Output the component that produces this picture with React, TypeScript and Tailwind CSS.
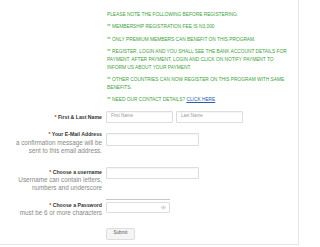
import { Eye } from "lucide-react";

const notes = [
  "PLEASE NOTE THE FOLLOWING BEFORE REGISTERING:",
  "** MEMBERSHIP REGISTRATION FEE IS N3,000",
  "** ONLY PREMIUM MEMBERS CAN BENEFIT ON THIS PROGRAM.",
  "** REGISTER, LOGIN AND YOU SHALL SEE THE BANK ACCOUNT DETAILS FOR PAYMENT. AFTER PAYMENT, LOGIN AND CLICK ON NOTIFY PAYMENT TO INFORM US ABOUT YOUR PAYMENT.",
  "** OTHER COUNTRIES CAN NOW REGISTER ON THIS PROGRAM WITH SAME BENEFITS.",
];

function Label({ text }: { text: string }) {
  return (
    <div className="text-[5.2px] leading-[8px] font-bold text-[#333]">
      <span className="text-[#c0392b]">* </span>
      {text}
    </div>
  );
}

function Input({ placeholder, className }: { placeholder?: string; className: string }) {
  return (
    <div
      className={`h-[12px] border border-[#ddd] rounded-[1px] bg-white shadow-[inset_0_1px_1px_rgba(0,0,0,0.04)] flex items-center px-[4px] text-[4.5px] text-[#999] ${className}`}
    >
      {placeholder}
    </div>
  );
}

export default function App() {
  return (
    <div className="w-[300px] h-[247px] bg-white overflow-hidden font-['Liberation_Sans',Arial,sans-serif]">
      <div className="w-[299px] h-[245px] border-r border-b border-[#e6e6e6]">
        {/* Notice */}
        <div className="pl-[107px] pt-[11px] w-[293px] text-[4.8px] leading-[7.6px] text-[#40a040] flex flex-col gap-[4.9px]">
          {notes.map((n) => (
            <p key={n}>{n}</p>
          ))}
          <p>
            ** NEED OUR CONTACT DETAILS?{" "}
            <span className="text-[#2a5db0] underline">CLICK HERE</span>
          </p>
        </div>

        {/* Name */}
        <div className="flex mt-[7px]">
          <div className="w-[102px] text-right pt-[2px]">
            <Label text="First & Last Name" />
          </div>
          <div className="pl-[4px] flex gap-[3px]">
            <Input placeholder="First Name" className="w-[67px]" />
            <Input placeholder="Last Name" className="w-[67px]" />
          </div>
        </div>

        {/* Email */}
        <div className="flex mt-[7px]">
          <div className="w-[102px] text-right">
            <Label text="Your E-Mail Address" />
            <div className="text-[6.3px] leading-[8px] text-[#888] mt-[1px]">
              a confirmation message will be
              <br />
              sent to this email address.
            </div>
          </div>
          <div className="pl-[4px] pt-[3px]">
            <Input className="w-[93px] h-[13px]" />
          </div>
        </div>

        {/* Username */}
        <div className="flex mt-[12px]">
          <div className="w-[102px] text-right pt-[1px]">
            <Label text="Choose a username" />
            <div className="text-[6.3px] leading-[8px] text-[#888]">
              Username can contain letters,
              <br />
              numbers and underscore
            </div>
          </div>
          <div className="pl-[4px]">
            <Input className="w-[93px]" />
          </div>
        </div>

        {/* Password */}
        <div className="flex mt-[6px]">
          <div className="w-[102px] text-right pt-[3px]">
            <Label text="Choose a Password" />
            <div className="text-[6.3px] leading-[8px] text-[#888]">must be 6 or more characters</div>
          </div>
          <div className="pl-[4px] pt-[1px] flex flex-col gap-[2px]">
            <div className="w-[64px] h-[1px] bg-[#c8c8c8]" />
            <div className="w-[64px] h-[11px] border border-[#ddd] rounded-[1px] flex items-center justify-end pr-[3px]">
              <Eye className="w-[5px] h-[5px] text-[#aaa]" strokeWidth={2} />
            </div>
          </div>
        </div>

        {/* Submit */}
        <div className="pl-[106px] mt-[11px]">
          <button className="w-[29px] h-[12px] border border-[#ddd] rounded-[2px] bg-[#f5f5f5] text-[4.5px] text-[#555] flex items-center justify-center">
            Submit
          </button>
        </div>
      </div>
    </div>
  );
}
